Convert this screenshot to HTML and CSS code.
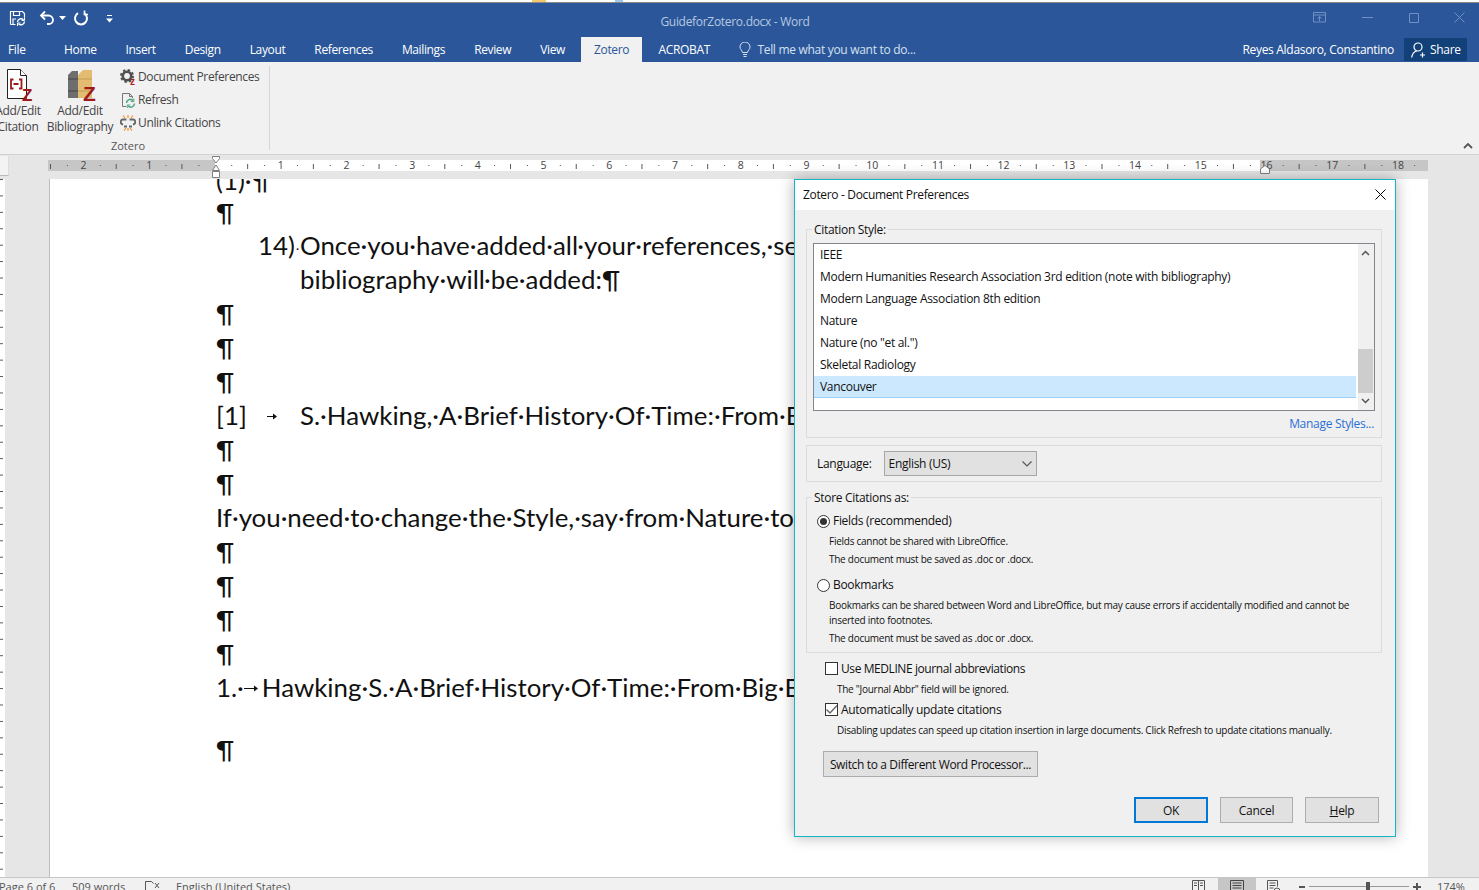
FILE: index.html
```html
<!DOCTYPE html>
<html lang="en">
<head>
<meta charset="utf-8">
<title>GuideforZotero.docx - Word</title>
<link rel="stylesheet" href="styles.css">
</head>
<body>
<div class="app">
  <div class="topstrip"></div>
  <header class="titlebar">
    <div class="title-row">
      <div class="qat">
        <svg class="qat-save" width="18" height="18" viewBox="0 0 18 18" fill="none" stroke="#fff" stroke-width="1.2"><path d="M1.500 15.500V2.500h12l2 2v4M1.500 15.500h5M4.500 2.500v4h6v-4M4 15v-5h3"/><path d="M8.500 13a3.500 3.500 0 0 1 6-2.200M15.500 12.500a3.500 3.500 0 0 1-6 2.200" stroke-width="1.400"/><path d="M15.500 8.500v3h-3M8.500 17v-3h3" stroke-width="1"/></svg>
        <svg class="qat-undo" width="16" height="16" viewBox="0 0 16 16" fill="none" stroke="#fff" stroke-width="1.800"><path d="M6 1.500 2 5.500l4 4"/><path d="M2.500 5.500h7a4.500 4.500 0 0 1 4.500 4.500c0 2.500-2 4-4 4H8"/></svg>
        <svg class="qat-caret" width="7" height="4" viewBox="0 0 7 4"><path d="M0 0h7L3.500 4z" fill="#fff"/></svg>
        <svg class="qat-redo" width="16" height="16" viewBox="0 0 16 16" fill="none" stroke="#fff" stroke-width="2"><path d="M5 3.200a6 6 0 1 0 6 0"/><path d="M11.500 0.500v4h3.500" stroke-width="1.600"/></svg>
        <svg class="qat-custom" width="7" height="8" viewBox="0 0 7 8"><path d="M1 .5h5" stroke="#fff"/><path d="M0 3.500h7L3.500 7.500z" fill="#fff"/></svg>
      </div>
      <div class="doc-title">GuideforZotero.docx - Word</div>
      <div class="win-btns">
        <svg width="14" height="11" viewBox="0 0 14 11" fill="none" stroke="#6f90c3"><path d="M.5.500h12v9.500H.5zM.5 3h12M6.500 9V4.500M4.500 6.500l2-2 2 2"/></svg>
        <svg class="win-min" width="11" height="1" viewBox="0 0 11 1"><path d="M0 .5h11" stroke="#6f90c3"/></svg>
        <svg class="win-max" width="10" height="10" viewBox="0 0 10 10" fill="none" stroke="#6f90c3"><path d="M.5.500h9v9h-9z"/></svg>
        <svg class="win-close" width="11" height="11" viewBox="0 0 11 11" fill="none" stroke="#6f90c3"><path d="M.5.500l10 10M10.500.500l-10 10"/></svg>
      </div>
    </div>
    <nav class="tab-row">
      <span class="tab tab-file">File</span>
      <span class="tab">Home</span>
      <span class="tab">Insert</span>
      <span class="tab">Design</span>
      <span class="tab">Layout</span>
      <span class="tab">References</span>
      <span class="tab">Mailings</span>
      <span class="tab">Review</span>
      <span class="tab">View</span>
      <span class="tab tab-active">Zotero</span>
      <span class="tab">ACROBAT</span>
      <span class="tell">
        <svg width="12" height="15" viewBox="0 0 12 15" fill="none" stroke="#d6e0f0"><path d="M3.500 10.500C3 8 1 7.500 1 5a5 5 0 0 1 10 0c0 2.500-2 3-2.500 5.500zM4 12.500h4M4.500 14.500h3"/></svg>
        Tell me what you want to do...
      </span>
      <span class="user">Reyes Aldasoro, Constantino</span>
      <span class="share">
        <svg width="16" height="16" viewBox="0 0 16 16" fill="none" stroke="#fff" stroke-width="1.200"><circle cx="7" cy="5" r="4"/><path d="M.7 15.500c.5-3.500 2.500-6 5-6.500M11.500 10.500v5M9 13h5"/></svg>
        Share
      </span>
    </nav>
  </header>

  <section class="ribbon">
    <div class="group">
      <div class="group-items">
        <div class="big-btn big-citation">
          <svg width="34" height="36" viewBox="0 0 34 36">
            <path d="M6.500 3.500h13l6 6v23h-19z" fill="#fff" stroke="#222"/>
            <path d="M19.500 3.500v6h6" fill="#fff" stroke="#222"/>
            <path d="M12.500 13.500H10v9h2.500M18 13.500h2.500v9H18M12.500 18h5" fill="none" stroke="#9c1a1c" stroke-width="1.800"/>
            <text class="zed" x="21" y="35">Z</text>
          </svg>
          <span>Add/Edit<br>Citation</span>
        </div>
        <div class="big-btn big-biblio">
          <svg width="34" height="36" viewBox="0 0 34 36">
            <path d="M5 9l4-4h6v27H5z" fill="#6e6e6e"/>
            <path d="M5 13h10M5 25h10" stroke="#444" fill="none"/>
            <path d="M15 9l5-5h9v28H15z" fill="#e3bc72"/>
            <path d="M15 13h14M15 25h14" stroke="#c29c52" fill="none"/>
            <text class="zed zed-big" x="20" y="35">Z</text>
          </svg>
          <span>Add/Edit<br>Bibliography</span>
        </div>
        <div class="small-col">
          <div class="small-btn">
            <svg width="16" height="16" viewBox="0 0 16 16" fill="none" stroke="#505050">
              <circle cx="7" cy="7" r="4.200" stroke-width="2.600"/>
              <circle cx="7" cy="7" r="6" stroke-width="2" stroke-dasharray="2.400 2.300"/>
              <text class="zed zed-small" x="10" y="16">z</text>
            </svg>
            Document Preferences
          </div>
          <div class="small-btn">
            <svg width="16" height="16" viewBox="0 0 16 16" fill="none">
              <path d="M6 14.500H2.500V1.500h7l3 3V6M9.500 1.500v3h3" stroke="#777"/>
              <path d="M6.500 11a3.800 3.800 0 0 1 6.500-2.500M14.500 11.500a3.800 3.800 0 0 1-6.500 2.500" stroke="#4da585" stroke-width="1.600"/>
              <path d="M13.800 6.500v3h-3M7.200 16v-3h3" stroke="#4da585"/>
            </svg>
            Refresh
          </div>
          <div class="small-btn">
            <svg width="16" height="16" viewBox="0 0 16 16" fill="none">
              <path d="M6.500 4.500H3.500a2.500 2.500 0 0 0-.5 5M4 11.500h3M9.500 4.500h3a2.500 2.500 0 0 1 .5 5M12 11.500H9" stroke="#666" stroke-width="1.800"/>
              <path d="M3 .5l2 2.500M8 0v3M13 .5L11 3M4 15.500l2-2.500M8 16v-3M12 15.500L10 13" stroke="#ee8a22" stroke-width="1.100"/>
            </svg>
            Unlink Citations
          </div>
        </div>
      </div>
      <div class="group-label">Zotero</div>
    </div>
    <svg class="collapse" width="10" height="7" viewBox="0 0 10 7" fill="none" stroke="#555" stroke-width="1.800"><path d="M1 6l4-4 4 4"/></svg>
  </section>

  <section class="ruler-band">
    <div class="ruler-corner"></div>
    <div class="ruler">
      <span>2</span><span>1</span><span></span><span>1</span><span>2</span><span>3</span><span>4</span><span>5</span><span>6</span><span>7</span><span>8</span><span>9</span><span>10</span><span>11</span><span>12</span><span>13</span><span>14</span><span>15</span><span>16</span><span>17</span><span>18</span>
    </div>
    <svg class="indent-left" width="10" height="23" viewBox="0 0 10 23" fill="#fff" stroke="#808080"><path d="M1.500.5h7v2L5 7 1.500 2.500zM1.500 14.500L5 9l3.500 5.500zM1.500 15.500h7v6h-7z"/></svg>
    <svg class="indent-right" width="10" height="9" viewBox="0 0 10 9" fill="#fff" stroke="#808080"><path d="M.5 8.500V4L5 .5 9.500 4v4.500z"/></svg>
  </section>

  <main class="doc-area">
    <div class="vruler"></div>
    <div class="gutter"></div>
    <article class="page">
      <p class="line line-first">(1)·¶</p>
      <p class="line line-second">¶</p>
      <p class="line list-item"><span class="num">14)</span><span class="tabdot">·</span>Once·you·have·added·all·your·references,·select</p>
      <p class="line list-cont">bibliography·will·be·added:¶</p>
      <p class="line">¶</p>
      <p class="line">¶</p>
      <p class="line">¶</p>
      <p class="line"><span class="refnum">[1]</span><span class="tabarrow"><svg width="10" height="7" viewBox="0 0 10 7"><path d="M0 3h6V.5L10 3.500 6 6.500V4H0z" fill="#111"/></svg></span>S.·Hawking,·A·Brief·History·Of·Time:·From·Big</p>
      <p class="line">¶</p>
      <p class="line">¶</p>
      <p class="line">If·you·need·to·change·the·Style,·say·from·Nature·to</p>
      <p class="line">¶</p>
      <p class="line">¶</p>
      <p class="line">¶</p>
      <p class="line">¶</p>
      <p class="line">1.·<span class="tabarrow tabarrow-short"><svg width="14" height="7" viewBox="0 0 14 7"><path d="M0 3h10V.5L14 3.500 10 6.500V4H0z" fill="#111"/></svg></span>Hawking·S.·A·Brief·History·Of·Time:·From·Big·Bang</p>
      <p class="line line-gap">¶</p>
    </article>
  </main>

  <footer class="status">
    <span class="st-page">Page 6 of 6</span>
    <span class="st-words">509 words</span>
    <svg class="st-proof" width="15" height="13" viewBox="0 0 15 13" fill="none" stroke="#555"><path d="M.5 12.500V.5h6l2 2M2 12.500h5M10 2l4 5M14 2l-4 5"/></svg>
    <span class="st-lang">English (United States)</span>
    <span class="st-spacer"></span>
    <svg class="st-view" width="13" height="13" viewBox="0 0 13 13" fill="none" stroke="#555"><path d="M.5.500h12v12H.5zM6.500.5v12M2 3h3M2 5.500h3M8 3h3M8 5.500h3"/></svg>
    <span class="st-view-active">
      <svg width="14" height="13" viewBox="0 0 14 13" fill="none" stroke="#444"><path d="M.5.500h13v12H.5zM2.500 3h9M2.500 5.500h9M2.500 8h9"/></svg>
    </span>
    <svg class="st-view" width="14" height="13" viewBox="0 0 14 13" fill="none" stroke="#555"><path d="M.5 12.500V.5h10v6M2.500 3h6M2.500 5.500h6M2.500 8h4"/><circle cx="10" cy="11" r="3"/></svg>
    <span class="zoom-minus"></span>
    <span class="zoom-track"><span class="zoom-thumb"></span></span>
    <span class="zoom-plus"></span>
    <span class="st-zoom">174%</span>
  </footer>

  <div class="dialog">
    <div class="dlg-title">
      <span>Zotero - Document Preferences</span>
      <svg width="11" height="11" viewBox="0 0 11 11" fill="none" stroke="#000"><path d="M.5.500l10 10M10.500.500l-10 10"/></svg>
    </div>
    <div class="dlg-body">
      <fieldset class="fs fs-style">
        <legend>Citation Style:</legend>
        <div class="listbox">
          <ul class="list">
            <li>IEEE</li>
            <li>Modern Humanities Research Association 3rd edition (note with bibliography)</li>
            <li>Modern Language Association 8th edition</li>
            <li>Nature</li>
            <li>Nature (no "et al.")</li>
            <li>Skeletal Radiology</li>
            <li class="selected">Vancouver</li>
          </ul>
          <div class="scrollbar">
            <svg width="9" height="6" viewBox="0 0 9 6" fill="none" stroke="#555" stroke-width="1.500"><path d="M1 5l3.500-3.500L8 5"/></svg>
            <div class="thumb"></div>
            <svg width="9" height="6" viewBox="0 0 9 6" fill="none" stroke="#555" stroke-width="1.500"><path d="M1 1l3.500 3.500L8 1"/></svg>
          </div>
        </div>
        <a class="manage">Manage Styles...</a>
      </fieldset>

      <div class="lang-box">
        <span>Language:</span>
        <div class="select">
          <span>English (US)</span>
          <svg width="10" height="6" viewBox="0 0 10 6" fill="none" stroke="#555" stroke-width="1.200"><path d="M.5.500 5 5 9.500.5"/></svg>
        </div>
      </div>

      <fieldset class="fs fs-store">
        <legend>Store Citations as:</legend>
        <div class="radio-row"><span class="radio radio-on"></span>Fields (recommended)</div>
        <p class="note note-first">Fields cannot be shared with LibreOffice.</p>
        <p class="note">The document must be saved as .doc or .docx.</p>
        <div class="radio-row radio-row-2"><span class="radio"></span>Bookmarks</div>
        <p class="note note-first note-tight">Bookmarks can be shared between Word and LibreOffice, but may cause errors if accidentally modified and cannot be<br>inserted into footnotes.</p>
        <p class="note">The document must be saved as .doc or .docx.</p>
      </fieldset>

      <div class="check-row check-row-1"><span class="check"></span>Use MEDLINE journal abbreviations</div>
      <p class="check-note check-note-1">The "Journal Abbr" field will be ignored.</p>
      <div class="check-row check-row-2">
        <span class="check"><svg width="13" height="11" viewBox="0 0 13 11" fill="none" stroke="#666" stroke-width="1.400"><path d="M1.500 5.500l3.500 3.500 7-7.500"/></svg></span>
        Automatically update citations
      </div>
      <p class="check-note">Disabling updates can speed up citation insertion in large documents. Click Refresh to update citations manually.</p>
      <button class="btn btn-switch">Switch to a Different Word Processor...</button>
      <div class="dlg-actions">
        <button class="btn btn-act btn-ok">OK</button>
        <button class="btn btn-act">Cancel</button>
        <button class="btn btn-act btn-help"><u>H</u>elp</button>
      </div>
    </div>
  </div>
</div>
</body>
</html>
```
FILE: styles.css
```css
* { box-sizing: border-box; }
html, body { margin: 0; padding: 0; }
body { width: 1479px; height: 890px; overflow: hidden; background: #e6e6e6; font-family: "Open Sans", "Noto Sans", sans-serif; font-size: 12px; letter-spacing: -.3px; color: #444; }
.app { position: relative; width: 1479px; height: 890px; overflow: hidden; display: flex; flex-direction: column; }

.topstrip { height: 3px; border-bottom: 1px solid #8a8a8a; flex: none; background: linear-gradient(to right, #fff 532px, #f3c96b 532px, #f3c96b 546px, #fff 546px, #fff 615px, #9cc8ee 615px, #9cc8ee 623px, #fff 623px); }

.titlebar { height: 59px; background: #2b579a; color: #fff; flex: none; display: flex; flex-direction: column; }
.title-row { height: 34px; display: flex; align-items: center; position: relative; }
.qat { display: flex; align-items: center; padding-left: 9px; padding-bottom: 5px; }
.qat-undo { margin-left: 12px; }
.qat-caret { margin-left: 4px; }
.qat-redo { margin-left: 7px; }
.qat-custom { margin-left: 17px; margin-top: 3px; }
.doc-title { position: absolute; left: 0; right: 0; text-align: center; color: #b8c8e0; top: 11px; line-height: 16px; padding-right: 9px; }
.win-btns { margin-left: auto; display: flex; align-items: center; padding-right: 14px; padding-bottom: 5px; }
.win-min { margin-left: 35px; }
.win-max { margin-left: 36px; }
.win-close { margin-left: 35px; }

.tab-row { height: 25px; display: flex; align-items: stretch; line-height: 26px; }
.tab { padding: 0 14.5px; white-space: nowrap; letter-spacing: -.36px; }
.tab-file { padding: 0 0 0 8px; width: 49.6px; }
.tab-active { background: #f1f1f1; color: #2b579a; padding: 0 13px; width: 61px; margin: 0 2px 0 1.6px; flex: none; }
.tell { margin-left: 15px; display: flex; align-items: center; gap: 6px; color: #d6e0f0; white-space: nowrap; }
.user { margin-left: auto; padding-right: 10px; }
.share { width: 63px; height: 23px; margin: 1px 12px 0 0; background: #124078; display: flex; align-items: center; gap: 3px; padding-left: 7px; line-height: 23px; }

.ribbon { height: 93px; background: #f1f1f1; border-bottom: 1px solid #d2d2d2; flex: none; display: flex; position: relative; color: #444; }
.group { width: 270px; height: 84px; margin-top: 4px; border-right: 1px solid #d6d6d6; display: flex; flex-direction: column; }
.group-items { display: flex; height: 73px; }
.big-btn { display: flex; flex-direction: column; align-items: center; text-align: center; line-height: 16px; white-space: nowrap; flex: none; }
.big-btn svg { height: 36px; flex: none; margin-bottom: 1px; }
.big-citation { width: 46px; margin-left: -5px; }
.big-biblio { width: 68px; margin-left: 5px; }
.small-col { display: flex; flex-direction: column; margin-left: 6px; margin-top: -1px; letter-spacing: -.35px; }
.small-btn { height: 23px; display: flex; align-items: center; gap: 2px; white-space: nowrap; }
.small-btn svg { flex: none; }
.group-label { text-align: center; padding-right: 13px; font-size: 11px; line-height: 14px; color: #555; margin-top: 4px; letter-spacing: 0; }
.zed { font-family: "Liberation Sans", sans-serif; font-weight: 700; font-size: 17px; fill: #9c1a1c; stroke: none; letter-spacing: 0; }
.zed-big { font-size: 21px; }
.zed-small { font-size: 10px; fill: #b02020; }
.collapse { position: absolute; right: 6px; bottom: 5px; }

.ruler-band { height: 24px; background: #e6e6e6; position: relative; flex: none; }
.ruler-corner { position: absolute; left: 0; top: 1px; width: 9px; height: 20px; background: #f3f3f3; border-bottom: 1px solid #bbb; border-right: 1px solid #ddd; }
.ruler { position: absolute; left: 48px; top: 5px; width: 1380px; height: 11px; padding-left: 2.7px; display: flex; color: #444; font-size: 10.5px; line-height: 11px; letter-spacing: 0;
  background:
    linear-gradient(to right, transparent 2.2px, #555 2.2px, #555 3.2px, transparent 3.2px) 0 4px / 65.72px 5px repeat-x,
    linear-gradient(to right, transparent 18.6px, #555 18.6px, #555 19.6px, transparent 19.6px) 0 5px / 32.86px 1px repeat-x,
    linear-gradient(to right, #c6c6c6 167px, #fff 167px, #fff 1212px, #c6c6c6 1212px); }
.ruler span { flex: 0 0 65.72px; text-align: center; }
.indent-left { position: absolute; left: 211px; top: 1px; }
.indent-right { position: absolute; left: 1260px; top: 10px; }

.doc-area { flex: 1; display: flex; min-height: 0; background: #e6e6e6; }
.vruler { width: 5px; flex: none; background-color: #fff; background-image: linear-gradient(to bottom, #555 1px, transparent 1px); background-size: 3px 16.43px; background-repeat: repeat-y; }
.gutter { width: 44px; flex: none; }
.page { width: 1379px; background: #fff; border-left: 1px solid #bdbdbd; padding-left: 166px; overflow: hidden; height: 698px; font-family: Lato, "Open Sans", sans-serif; font-size: 25.85px; letter-spacing: 0; color: #111; }
.line { margin: 0; height: 34px; line-height: 34px; white-space: nowrap; }
.line-first { margin-top: -16px; }
.line-second { margin-top: -2px; }
.line-gap { margin-top: 28px; }
.list-item { margin-left: 42px; margin-top: -1px; }
.list-cont { margin-left: 84px; }
.num { display: inline-block; width: 38px; }
.tabdot { display: inline-block; width: 4px; font-size: 12px; vertical-align: 2px; }
.refnum { display: inline-block; width: 51px; }
.tabarrow { display: inline-block; width: 33px; }
.tabarrow svg { vertical-align: 5px; }
.tabarrow-short { width: 18px; }

.status { height: 13px; flex: none; background: #f1f1f1; border-top: 1px solid #c6c6c6; display: flex; align-items: flex-start; font-size: 11px; line-height: 17px; color: #555; position: relative; overflow: hidden; letter-spacing: 0; }
.st-page { margin-left: -1px; width: 73px; }
.st-words { width: 73px; }
.st-proof { margin-top: 3px; }
.st-lang { margin-left: 16px; }
.st-spacer { flex: 1; }
.st-view { margin-top: 2px; flex: none; }
.st-view-active { width: 38px; height: 13px; background: #c6c6c6; margin-left: 13px; margin-right: 11px; display: flex; justify-content: center; padding-top: 2px; flex: none; }
.zoom-minus { width: 6px; height: 2px; background: #555; margin: 8px 0 0 18px; flex: none; }
.zoom-track { width: 100px; height: 1px; background: #999; margin: 8px 0 0 4px; position: relative; flex: none; }
.zoom-thumb { position: absolute; left: 57px; top: -4px; width: 4px; height: 12px; background: #555; }
.zoom-plus { width: 8px; height: 8px; margin: 5px 0 0 4px; flex: none; background: linear-gradient(#555, #555) 50% 50% / 8px 2px no-repeat, linear-gradient(#555, #555) 50% 50% / 2px 8px no-repeat; }
.st-zoom { margin-left: 16px; margin-right: 8px; width: 34px; flex: none; }

.dialog { position: absolute; left: 794px; top: 179px; width: 602px; height: 658px; background: #f0f0f0; border: 1px solid #17b4c6; box-shadow: 0 0 14px rgba(0,0,0,.3); color: #111; display: flex; flex-direction: column; }
.dlg-title { height: 30px; background: #fff; flex: none; display: flex; align-items: center; justify-content: space-between; padding: 0 9px 2px 8px; letter-spacing: -.34px; }
.dlg-body { flex: 1; padding: 12px 13px 0 11px; display: flex; flex-direction: column; position: relative; }

.fs { margin: 0; padding: 0; border: 1px solid #dcdcdc; min-width: 0; flex: none; }
.fs legend { padding: 0 2px; line-height: 18px; height: 16px; }
.fs-style { height: 217px; padding: 6px 6px 0 6px; margin-top: -1px; }
.fs-style legend { margin-left: -1px; }
.listbox { height: 168px; border: 1px solid #82868c; background: #fff; display: flex; }
.list { list-style: none; margin: 0; padding: 0; flex: 1; }
.list li { height: 22px; line-height: 21px; padding-left: 6px; white-space: nowrap; }
.list li.selected { background: #cce8ff; border-bottom: 1px solid #99d1ff; }
.scrollbar { width: 16px; margin-left: 2px; background: #f0f0f0; display: flex; flex-direction: column; align-items: center; padding-top: 6px; padding-right: 1px; }
.thumb { width: 15px; height: 44px; background: #cdcdcd; margin-top: 93px; margin-bottom: 5px; }
.manage { display: block; text-align: right; color: #2b6fd6; line-height: 16px; margin-top: 5px; padding-right: 1px; }

.lang-box { height: 37px; margin-top: 7px; border: 1px solid #dcdcdc; display: flex; align-items: center; padding-left: 10px; flex: none; }
.select { width: 153px; height: 25px; margin-left: 12px; background: #e1e1e1; border: 1px solid #a6a6a6; display: flex; align-items: center; justify-content: space-between; padding: 0 4px; }

.fs-store { height: 164px; margin-top: 7px; padding: 0 10px; }
.fs-store legend { margin-left: -5px; }
.radio-row { display: flex; align-items: center; gap: 3px; height: 18px; margin-top: 7px; line-height: 16px; }
.radio-row-2 { margin-top: 9px; }
.radio { width: 13px; height: 13px; border-radius: 50%; background: #fff; border: 1px solid #333; flex: none; position: relative; }
.radio-on::after { content: ""; position: absolute; left: 2px; top: 2px; width: 7px; height: 7px; border-radius: 50%; background: #333; }
.note { margin: 3px 0 0 12px; font-size: 10px; line-height: 15px; white-space: nowrap; letter-spacing: -.26px; }
.note-first { margin-top: 4px; }
.note-tight { margin-top: 4px; }

.check-row { display: flex; align-items: center; gap: 3px; height: 16px; margin: 7px 0 0 19px; }
.check-row-1 { letter-spacing: -.42px; }
.check-row-2 { margin-top: 5px; }
.check { width: 13px; height: 13px; background: #fff; border: 1px solid #333; flex: none; display: flex; }
.check svg { margin: 0 -1px; }
.check-note { margin: 6px 0 0 31px; font-size: 10px; line-height: 14px; white-space: nowrap; letter-spacing: -.26px; }
.check-note-1 { margin-top: 6px; }
.btn { font: inherit; letter-spacing: inherit; background: #e1e1e1; border: 1px solid #adadad; color: #111; padding: 0; }
.btn-switch { width: 215px; height: 26px; margin: 14px 0 0 17px; flex: none; letter-spacing: -.36px; }
.dlg-actions { display: flex; gap: 12px; margin: 20px 0 0 328px; }
.btn-act { width: 73px; height: 26px; flex: none; }
.btn-ok { width: 74px; border: 2px solid #0078d7; }
.btn-help { width: 74px; }
```
